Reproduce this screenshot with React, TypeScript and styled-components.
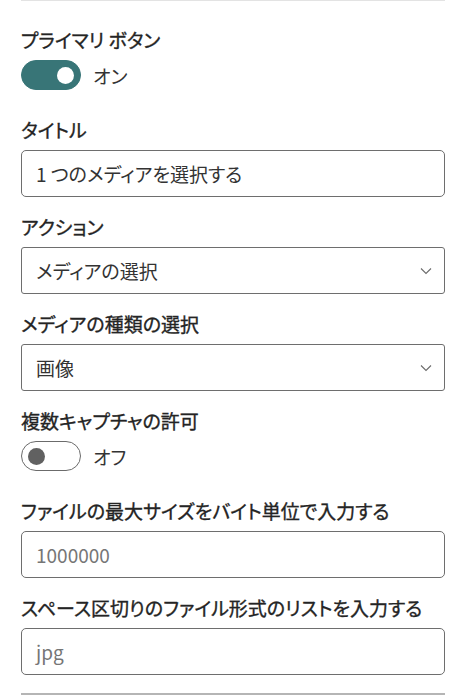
import React from "react"
import styled, { createGlobalStyle } from "styled-components"

const GlobalStyle = createGlobalStyle`
  html, body {
    margin: 0;
    padding: 0;
    background: #ffffff;
  }
  body {
    font-family: "Noto Sans CJK JP", "Noto Sans", sans-serif;
    font-feature-settings: "palt";
    color: #242424;
  }
`

const Panel = styled.div`
  width: 424px;
  margin: 0 20px 0 21px;
  border-top: 1px solid #e3e3e3;
  padding-top: 25px;
  display: flex;
  flex-direction: column;
`

const Field = styled.div<{ $toggle?: boolean }>`
  display: flex;
  flex-direction: column;
  margin-bottom: ${(p) => (p.$toggle ? "26px" : "16px")};
`

const Label = styled.div`
  font-size: 19px;
  font-weight: 400;
  -webkit-text-stroke: 0.35px #242424;
  line-height: 28px;
  height: 28px;
  margin-bottom: 6px;
  white-space: nowrap;
`

const TextBox = styled.div<{ $placeholder?: boolean }>`
  box-sizing: border-box;
  height: 47px;
  border: 1px solid #6e6e6e;
  border-radius: 5px;
  padding: 0 14px;
  display: flex;
  align-items: center;
  font-size: 19px;
  color: ${(p) => (p.$placeholder ? "#767676" : "#333333")};
`

const Select = styled.div`
  box-sizing: border-box;
  height: 47px;
  border: 1px solid #6e6e6e;
  border-radius: 3px;
  padding: 0 12px 0 14px;
  display: flex;
  align-items: center;
  justify-content: space-between;
  font-size: 19px;
  color: #333333;
`

const ToggleRow = styled.div`
  display: flex;
  align-items: center;
  gap: 12px;
  height: 30px;
`

const Track = styled.div<{ $on?: boolean }>`
  box-sizing: border-box;
  width: 60px;
  height: 30px;
  border-radius: 15px;
  display: flex;
  align-items: center;
  padding: 0 6px;
  justify-content: ${(p) => (p.$on ? "flex-end" : "flex-start")};
  background: ${(p) => (p.$on ? "#387577" : "#ffffff")};
  border: 1px solid ${(p) => (p.$on ? "#387577" : "#6b6b6b")};
`

const Knob = styled.div<{ $on?: boolean }>`
  width: 17px;
  height: 17px;
  border-radius: 50%;
  background: ${(p) => (p.$on ? "#ffffff" : "#616161")};
`

const ToggleText = styled.span`
  font-size: 19px;
  color: #333333;
`

const Divider = styled.div`
  height: 0;
  border-top: 2px solid #b5b5b5;
  margin-top: 2px;
`

const Chevron = () => (
  <svg width="12" height="8" viewBox="0 0 12 8" fill="none">
    <path d="M1 1.5 L6 6.5 L11 1.5" stroke="#6b6b6b" strokeWidth="1.1" />
  </svg>
)

const Toggle = ({ on, text }: { on?: boolean; text: string }) => (
  <ToggleRow>
    <Track $on={on}>
      <Knob $on={on} />
    </Track>
    <ToggleText>{text}</ToggleText>
  </ToggleRow>
)

export default function App() {
  return (
    <>
      <GlobalStyle />
      <Panel>
        <Field $toggle>
          <Label>プライマリ ボタン</Label>
          <Toggle on text="オン" />
        </Field>
        <Field>
          <Label>タイトル</Label>
          <TextBox>1 つのメディアを選択する</TextBox>
        </Field>
        <Field>
          <Label>アクション</Label>
          <Select>
            <span>メディアの選択</span>
            <Chevron />
          </Select>
        </Field>
        <Field>
          <Label>メディアの種類の選択</Label>
          <Select>
            <span>画像</span>
            <Chevron />
          </Select>
        </Field>
        <Field $toggle>
          <Label>複数キャプチャの許可</Label>
          <Toggle text="オフ" />
        </Field>
        <Field>
          <Label>ファイルの最大サイズをバイト単位で入力する</Label>
          <TextBox $placeholder>1000000</TextBox>
        </Field>
        <Field>
          <Label>スペース区切りのファイル形式のリストを入力する</Label>
          <TextBox $placeholder>jpg</TextBox>
        </Field>
        <Divider />
      </Panel>
    </>
  )
}
